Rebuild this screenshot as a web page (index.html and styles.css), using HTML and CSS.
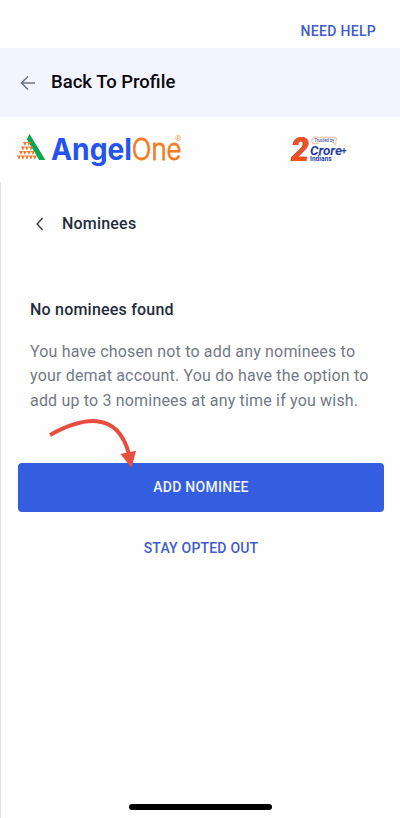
FILE: index.html
```html
<!DOCTYPE html>
<html lang="en">
<head>
<meta charset="utf-8">
<meta name="viewport" content="width=device-width, initial-scale=1">
<title>Nominees</title>
<link rel="stylesheet" href="styles.css">
</head>
<body>
<div class="screen">
  <div class="help-bar"><a class="help">NEED HELP</a></div>
  <header class="back-bar">
    <svg class="back-arrow" width="16" height="16" viewBox="0 0 16 16"><path d="M15 8H1.5M8 1.5L1.5 8L8 14.5"/></svg>
    <span class="back-title">Back To Profile</span>
  </header>
  <div class="brand-bar">
    <svg class="logo" width="168" height="40" viewBox="0 0 168 40">
      <path class="green" d="M13.4 -.2L29.4 26H23.2L10.9 5.2Z"/>
      <path class="orange" d="M6.9 8.1h4l-2 4zM10.9 8.1h4l-2 4zM4.9 12.6h4l-2 4zM8.9 12.6h4l-2 4zM12.9 12.6h4l-2 4zM2.9 17.1h4l-2 4zM6.9 17.1h4l-2 4zM10.9 17.1h4l-2 4zM14.9 17.1h4l-2 4zM.9 21.6h4l-2 4.2zM4.9 21.6h4l-2 4.2zM8.9 21.6h4l-2 4.2zM12.9 21.6h4l-2 4.2zM16.9 21.6h4l-2 4.2z"/>
      <text class="angel" x="35" y="25.6" textLength="81" lengthAdjust="spacingAndGlyphs">Angel</text>
      <text class="one" x="115.8" y="25.6" textLength="49.8" lengthAdjust="spacingAndGlyphs">One</text>
      <text class="reg" x="159" y="7.2">®</text>
    </svg>
    <svg class="trust" width="62" height="34" viewBox="0 0 62 34">
      <text class="two-shadow" x="2.6" y="27.3" textLength="18" lengthAdjust="spacingAndGlyphs">2</text>
      <text class="two" x="3.2" y="26.6" textLength="18" lengthAdjust="spacingAndGlyphs">2</text>
      <path class="tag" d="M26 3.2H47Q48.6 3.2 48.4 4.8L47.6 10.6L45.5 9.2M31 9.2H25Q23.6 9.2 23.8 7.7L24.2 4.6Q24.4 3.2 26 3.2"/>
      <text class="trusted" x="26.3" y="8.4" textLength="20" lengthAdjust="spacingAndGlyphs">Trusted by</text>
      <text class="crore" x="22" y="20.7" textLength="32" lengthAdjust="spacingAndGlyphs">Crore</text>
      <text class="plus" x="53.4" y="20">+</text>
      <text class="indians" x="22" y="27.4" textLength="21.6" lengthAdjust="spacingAndGlyphs">Indians</text>
    </svg>
  </div>
  <main class="content">
    <div class="section-head">
      <svg class="chevron" width="8" height="14" viewBox="0 0 8 14"><path d="M6.6 1L1.2 7L6.6 13"/></svg>
      <h1>Nominees</h1>
    </div>
    <h2>No nominees found</h2>
    <p>You have chosen not to add any nominees to<br>your demat account. You do have the option to<br>add up to 3 nominees at any time if you wish.</p>
    <div class="actions">
      <button class="add">ADD NOMINEE</button>
      <svg class="pointer" width="92" height="54" viewBox="0 0 92 54">
        <path class="curve" d="M4 18C35 1 71-8 83 37"/>
        <path class="head" d="M74.5 37L90 33.7L85.5 51Z"/>
      </svg>
      <a class="opt-out">STAY OPTED OUT</a>
    </div>
    <div class="home-indicator"></div>
  </main>
</div>
</body>
</html>
```
FILE: styles.css
```css
* { box-sizing: border-box; }
body { margin: 0; background: #fefefe; font-family: Roboto, "Liberation Sans", sans-serif; }
.screen { height: 818px; display: flex; flex-direction: column; overflow: hidden; }
.help-bar { height: 48px; padding: 22px 24px 0 0; text-align: right; line-height: 18px; }
.help { color: #405bcc; font-size: 14px; font-weight: 500; letter-spacing: .3px; }
.back-bar { height: 69px; background: #f4f4fe; display: flex; align-items: center; padding-left: 20px; gap: 15px; }
.back-arrow { fill: none; stroke: #6c7587; stroke-width: 1.6; }
.back-title { font-size: 18.5px; font-weight: 500; color: #08080c; padding-bottom: 2px; }
.brand-bar { height: 65px; display: flex; justify-content: space-between; padding: 17px 50px 0 16px; }
.logo, .trust { overflow: visible; }
.green { fill: #09a74e; }
.orange { fill: #f47b2b; }
.angel { font: 700 30px Inter, sans-serif; fill: #2453ef; }
.one { font: 300 30px Inter, sans-serif; fill: #f57920; stroke: #f57920; stroke-width: .8; }
.reg { font: 8px Roboto, sans-serif; fill: #e6a04c; }
.two { font: italic 900 33px Roboto, sans-serif; fill: #f4511e; }
.two-shadow { font: italic 900 33px Roboto, sans-serif; fill: #5878c4; }
.tag { fill: none; stroke: #f4a27d; stroke-width: .8; }
.trusted { font: 500 5px Roboto, sans-serif; fill: #4557a5; }
.crore { font: italic 700 12.5px Roboto, sans-serif; fill: #273fa6; }
.plus { font: 700 9px Roboto, sans-serif; fill: #273fa6; }
.indians { font: 700 6.5px Roboto, sans-serif; fill: #273fa6; }
.content { flex: 1; border-left: 1px solid #e2e2e5; display: flex; flex-direction: column; padding: 0 16px 0 17px; }
.section-head { display: flex; align-items: center; gap: 18px; margin: 31px 0 0 18px; height: 22px; }
.chevron { fill: none; stroke: #343b48; stroke-width: 1.4; }
h1, h2 { margin: 0; font-size: 16px; font-weight: 500; line-height: 22px; color: #252d3d; }
h1 { letter-spacing: .2px; }
h2 { margin: 64px 0 0 12px; letter-spacing: .21px; }
p { margin: 18.6px 0 0 12px; font-size: 16px; letter-spacing: .18px; line-height: 24.7px; color: #737985; white-space: nowrap; }
.actions { position: relative; margin-top: 48.9px; display: flex; flex-direction: column; align-items: center; }
.add { width: 100%; height: 49.5px; border: 0; border-radius: 4px; background: #345de0; color: #f0f3ff; font: 500 14px Roboto, sans-serif; letter-spacing: .27px; padding: 0 0 1px; }
.pointer { position: absolute; left: 28px; top: -46px; }
.curve { fill: none; stroke: #e84d40; stroke-width: 4; }
.head { fill: #e84d40; }
.opt-out { margin-top: 27px; color: #405bcc; font-size: 14px; font-weight: 500; letter-spacing: .2px; line-height: 18px; }
.home-indicator { width: 143px; height: 6px; border-radius: 3px; background: #000; margin: auto 0 8px 111px; }
```
